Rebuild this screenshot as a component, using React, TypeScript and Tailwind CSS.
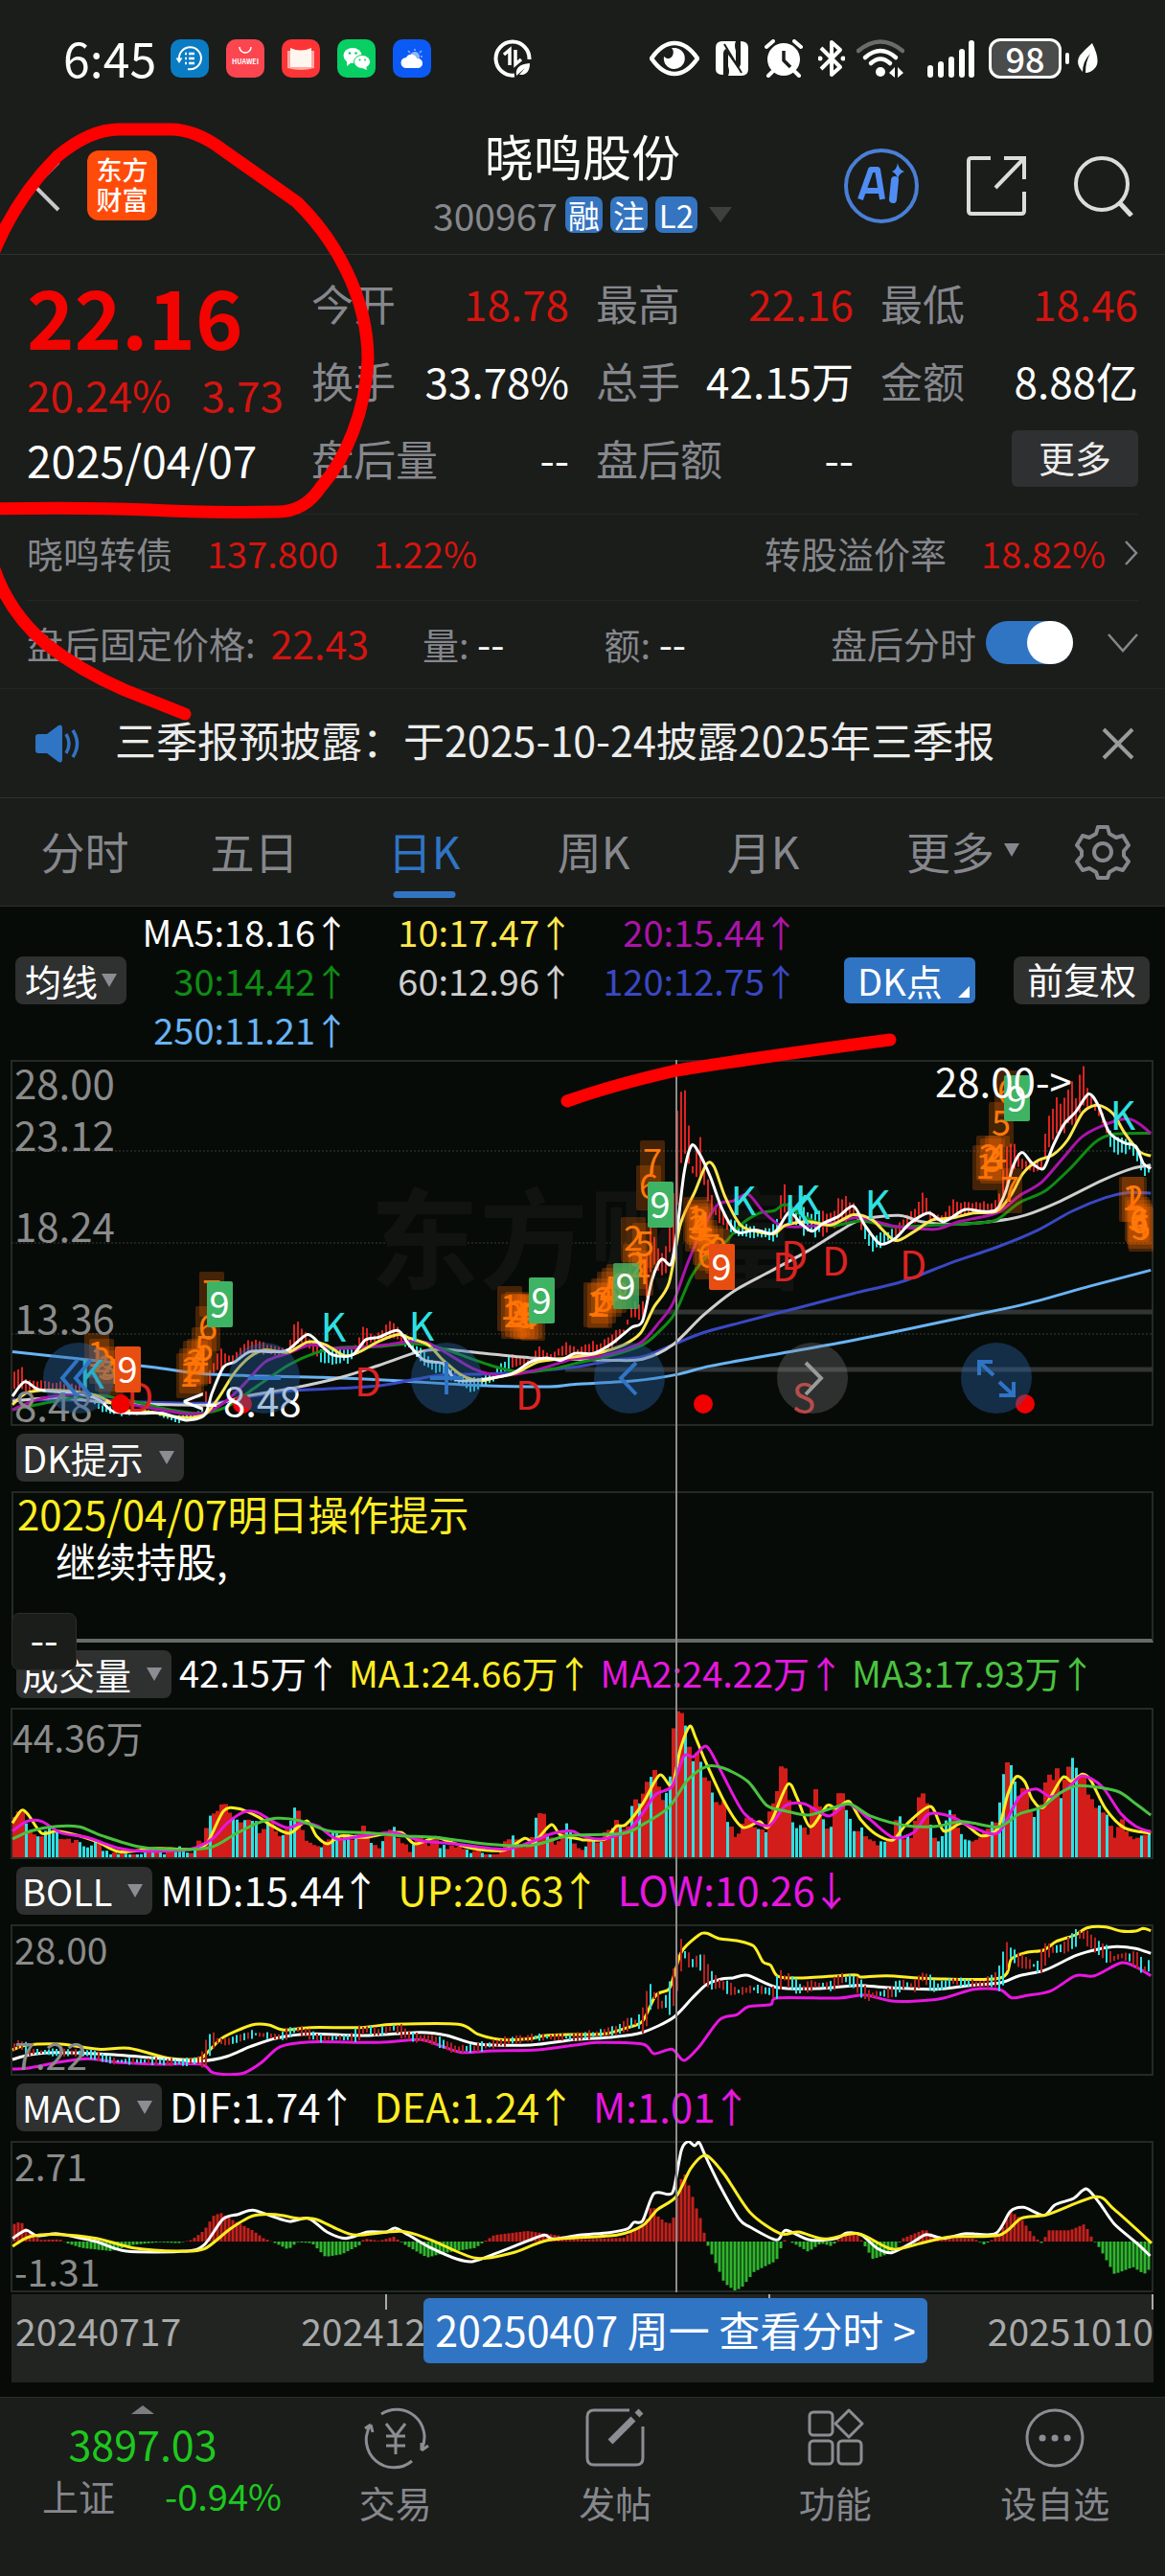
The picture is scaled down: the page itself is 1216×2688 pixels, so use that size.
import { useState } from 'react';
import type { JSX, ReactNode } from 'react';

/**
 * Stock detail screen: quote header, K-line chart with its indicator panels
 * and the bottom action bar.
 */

type Point = [number, number];

/** Maps stored series values onto the 1216-wide canvas of a panel. */
interface IGrid {
  ox: number;
  sx: number;
  oy: number;
  sy: number;
}

const RED = '#dc2320';
const CYAN = '#2ee0e2';
const YELLOW = '#ffee22';
const MAGENTA = '#e816e0';
const FRAME = '#262a27';

/* ---------- chart helpers ---------- */

function parse(raw: string, grid: IGrid): Point[] {
  return raw.split(' ').map((pair) => {
    const [x, y] = pair.split(',').map(Number);
    return [grid.ox + x / grid.sx, y / grid.sy + grid.oy];
  });
}

/** Every series is stored as a left and a right half. */
function series(left: string, right: string, oy: number, sy: number): Point[] {
  return [
    ...parse(left, { ox: 0, sx: 2.529, oy, sy }),
    ...parse(right, { ox: 600, sx: 2.545, oy, sy }),
  ].sort((a, b) => a[0] - b[0]);
}

function smooth(points: Point[]): string {
  let d = `M${points[0][0].toFixed(1)} ${points[0][1].toFixed(1)}`;
  for (let i = 0; i < points.length - 1; i++) {
    const p0 = points[Math.max(0, i - 1)];
    const p1 = points[i];
    const p2 = points[i + 1];
    const p3 = points[Math.min(points.length - 1, i + 2)];
    const k = 7;
    d += ` C${(p1[0] + (p2[0] - p0[0]) / k).toFixed(1)} ${(p1[1] + (p2[1] - p0[1]) / k).toFixed(1)}`;
    d += ` ${(p2[0] - (p3[0] - p1[0]) / k).toFixed(1)} ${(p2[1] - (p3[1] - p1[1]) / k).toFixed(1)}`;
    d += ` ${p2[0].toFixed(1)} ${p2[1].toFixed(1)}`;
  }
  return d;
}

function valueAt(points: Point[], x: number): number {
  for (let i = 1; i < points.length; i++) {
    if (x <= points[i][0]) {
      const [x0, y0] = points[i - 1];
      const [x1, y1] = points[i];
      return x1 === x0 ? y1 : y0 + ((y1 - y0) * Math.max(0, x - x0)) / (x1 - x0);
    }
  }
  return points[points.length - 1][1];
}

function noise(i: number): number {
  const v = Math.sin(i * 12.9898) * 43758.5453;
  return v - Math.floor(v);
}

const BARS = Array.from({ length: 297 }, (_, i) => 15 + i * 4);

/* ---------- K-line data ---------- */

const k = (left: string, right: string) => series(left, right, -167, 2.8);

const K_HIGH = k(
  '33,1390 52,1345 70,1400 160,1405 220,1415 225,1440 270,1475 400,1490 470,1505 538,1490 548,1390 580,1300 610,1335 660,1280 720,1300 760,1310 781,1220 815,1275 845,1305 930,1310 963,1235 985,1270 1035,1225 1060,1260 1090,1285 1150,1345 1240,1395 1300,1380 1348,1320 1400,1345 1424,1295 1450,1330 1490,1290 1520,1310',
  '0,1300 45,1285 60,1300 105,1250 130,1255 155,1170 180,1180 195,970 205,900 215,1000 240,1030 260,820 268,780 272,545 292,505 300,620 315,800 326,670 332,670 345,770 370,880 405,920 440,940 500,960 535,940 545,870 552,800 570,890 600,890 640,900 660,905 690,900 705,850 740,880 765,940 790,980 840,960 880,920 910,890 928,835 945,910 980,920 1005,870 1060,880 1110,880 1130,850 1145,720 1155,690 1190,750 1220,770 1245,740 1255,580 1265,660 1275,545 1290,590 1325,505 1335,600 1343,467 1350,467 1360,540 1380,590 1410,630 1430,690 1470,690 1490,710 1510,770 1530,760',
);
const K_LOW = k(
  '33,1440 100,1440 220,1445 270,1500 330,1510 400,1500 470,1530 540,1500 560,1400 600,1355 660,1330 760,1335 800,1300 850,1360 920,1360 960,1310 1040,1285 1080,1320 1130,1375 1180,1400 1245,1440 1300,1410 1350,1380 1424,1350 1520,1340',
  '0,1330 100,1320 155,1220 180,1235 205,1100 240,1100 262,1060 280,870 300,780 330,830 370,930 405,970 440,990 500,995 530,1010 560,930 600,980 640,1000 680,970 740,930 765,980 785,1035 840,1000 880,960 930,930 980,950 1050,920 1130,910 1150,830 1190,790 1245,800 1280,700 1330,660 1370,600 1400,650 1430,745 1480,745 1510,820 1530,800',
);
/** Canvas ranges in which the bars are painted in the "D" colour. */
const D_RANGES: Point[] = [[97, 214], [332, 368], [423, 534], [760, 812], [830, 856], [900, 934], [1156, 1203]];

const K_LINES = [
  {
    color: '#69b4f5',
    points: k(
      '33,1320 200,1340 400,1365 520,1383 650,1390 850,1395 1050,1405 1250,1418 1450,1422',
      '0,1415 160,1405 270,1387 360,1362 520,1330 700,1295 880,1255 1060,1213 1200,1180 1370,1128 1530,1082',
    ),
  },
  {
    color: '#3a48c4',
    points: k(
      '33,1460 200,1462 400,1468 560,1470 640,1455 760,1435 900,1427 1000,1420 1100,1400 1170,1388 1300,1385 1400,1378',
      '0,1365 100,1345 180,1335 260,1300 340,1265 440,1235 600,1190 740,1150 870,1115 1000,1060 1120,1015 1230,965 1320,910 1410,870 1470,855 1530,857',
    ),
  },
  {
    color: '#cfcfcf',
    points: k(
      '33,1465 150,1455 300,1470 450,1475 560,1475 650,1450 780,1425 900,1395 1000,1360 1100,1322 1170,1313 1280,1325 1400,1338',
      '0,1342 100,1345 180,1342 260,1300 340,1215 420,1145 520,1085 620,1025 700,970 760,935 860,922 920,940 1000,948 1120,938 1200,920 1290,880 1400,820 1480,785 1530,775',
    ),
  },
  {
    color: '#0f8c14',
    points: k(
      '33,1490 120,1470 250,1448 350,1465 450,1490 530,1500 600,1480 680,1420 760,1360 830,1325 900,1308 1000,1305 1080,1296 1150,1305 1230,1335 1310,1365 1380,1380 1460,1370',
      '0,1355 100,1330 180,1300 220,1265 265,1210 310,1100 360,1030 400,1000 440,950 490,915 530,908 560,890 600,920 650,945 690,952 760,938 850,955 960,950 1060,945 1120,935 1180,885 1250,850 1320,780 1380,710 1430,685 1530,682',
    ),
  },
  {
    color: '#ab14aa',
    points: k(
      '33,1490 100,1460 200,1445 300,1465 400,1485 480,1500 540,1500 590,1470 640,1420 700,1350 760,1325 820,1300 880,1310 950,1308 1020,1300 1080,1290 1130,1295 1180,1325 1250,1370 1320,1390 1400,1378 1480,1352',
      '0,1340 60,1335 130,1315 180,1290 220,1240 260,1180 300,1060 340,960 380,890 420,880 460,860 500,910 545,950 600,955 680,945 750,928 800,940 860,955 960,962 1020,940 1120,915 1180,865 1240,825 1300,750 1350,690 1420,652 1470,640 1500,655 1530,682',
    ),
  },
  {
    color: '#ffe84d',
    points: k(
      '33,1475 70,1440 130,1432 200,1437 260,1450 330,1490 400,1497 460,1510 510,1512 545,1500 580,1450 620,1380 660,1335 700,1315 760,1322 812,1292 860,1300 910,1332 950,1320 1000,1290 1050,1270 1080,1280 1130,1300 1170,1345 1220,1390 1270,1405 1310,1395 1360,1383 1420,1350 1470,1342',
      '0,1335 60,1325 130,1300 175,1265 210,1190 250,1120 280,950 320,850 350,772 370,780 400,870 440,950 480,968 530,975 560,950 620,940 680,950 740,920 790,935 850,995 900,970 950,935 1000,930 1060,915 1120,910 1160,860 1190,800 1230,762 1270,745 1310,700 1350,620 1390,600 1430,625 1460,680 1500,735 1530,748',
    ),
  },
  {
    color: '#ffffff',
    points: k(
      '33,1450 65,1408 100,1430 150,1437 200,1440 260,1460 300,1495 370,1500 430,1500 490,1520 540,1505 560,1440 590,1365 620,1350 660,1320 720,1320 760,1315 812,1270 850,1305 880,1330 930,1330 965,1285 1000,1278 1050,1258 1080,1300 1120,1345 1170,1355 1200,1400 1240,1405 1280,1400 1350,1385 1400,1350 1440,1338 1480,1345',
      '0,1325 50,1325 100,1295 150,1250 180,1230 205,1110 230,1050 255,1065 270,980 290,800 310,718 330,740 360,810 390,900 420,960 440,973 480,965 520,975 540,960 570,912 600,945 630,968 660,945 700,925 740,895 770,950 810,1005 850,990 890,945 940,915 980,940 1035,905 1080,910 1120,905 1145,850 1165,775 1188,738 1215,770 1245,785 1270,720 1300,655 1330,620 1365,567 1390,600 1420,680 1460,710 1490,720 1510,770 1530,785',
    ),
  },
];

interface IMark {
  text: string;
  x: number;
  y: number;
}

/** Nine-turn counters, drawn as orange digits on a translucent chip. */
const COUNTERS: IMark[] = [
  ['1', 101, 308], ['2', 106, 314], ['3', 112, 322], ['4', 116, 326],
  ['1', 197, 329], ['2', 200, 324], ['3', 204, 316], ['4', 208, 314], ['5', 213, 302], ['6', 217, 280], ['7', 221, 244],
  ['1', 532, 259], ['2', 536, 267], ['3', 540, 265], ['4', 545, 267], ['5', 549, 268], ['6', 553, 267], ['7', 556, 269],
  ['1', 622, 255], ['2', 626, 256], ['3', 630, 251], ['4', 636, 244], ['5', 641, 240], ['6', 646, 236],
  ['2', 661, 187], ['3', 663, 215], ['4', 669, 222], ['5', 673, 193], ['6', 677, 133], ['7', 681, 107],
  ['1', 726, 166], ['2', 730, 169], ['3', 728, 176], ['4', 732, 173], ['5', 736, 190], ['6', 738, 205], ['7', 742, 196], ['8', 749, 199],
  ['1', 1028, 112], ['2', 1032, 102], ['3', 1036, 105], ['4', 1041, 102], ['5', 1045, 67], ['6', 1051, 34], ['7', 1054, 136],
  ['1', 1181, 145], ['2', 1184, 145], ['3', 1187, 166], ['4', 1190, 173], ['5', 1191, 176], ['6', 1189, 169],
].map(([text, x, y]) => ({ text: String(text), x: Number(x), y: Number(y) }));

const NINES = [
  { x: 229, y: 255, color: '#3fb364' },
  { x: 133, y: 323, color: '#e84e12' },
  { x: 565, y: 251, color: '#3fb364' },
  { x: 653, y: 236, color: '#3fb364cc' },
  { x: 689, y: 151, color: '#3fb364' },
  { x: 753, y: 216, color: '#e84e12' },
  { x: 1061, y: 40, color: '#3fb364' },
];

const LETTERS: (IMark & { color: string })[] = [
  ['K', 96, 328, CYAN], ['K', 348, 279, CYAN], ['K', 440, 278, CYAN], ['K', 776, 147, CYAN], ['K', 832, 156, CYAN],
  ['K', 843, 146, CYAN], ['K', 916, 151, CYAN], ['K', 1172, 58, CYAN],
  ['D', 146, 352, RED], ['D', 384, 336, RED], ['D', 552, 350, RED], ['D', 820, 216, RED], ['D', 829, 204, RED],
  ['D', 872, 210, RED], ['D', 953, 214, RED], ['S', 839, 353, '#c93535'],
].map(([text, x, y, color]) => ({ text: String(text), x: Number(x), y: Number(y), color: String(color) }));

/* ---------- volume data ---------- */

const v = (left: string, right: string) => series(left, right, -13, 3);

const VOLUME = v(
  '33,335 40,400 52,328 65,380 80,425 110,430 135,405 160,430 200,450 235,475 257,440 270,480 300,488 370,488 405,465 430,485 478,465 500,480 535,440 548,375 560,348 580,358 590,315 600,352 635,390 645,370 670,375 685,420 710,385 745,435 770,360 782,330 800,430 830,465 855,460 883,405 900,430 920,435 945,430 963,393 980,462 1005,460 1035,397 1050,445 1085,475 1105,410 1130,460 1147,420 1160,460 1200,465 1240,478 1290,485 1320,485 1348,418 1370,460 1400,460 1412,365 1437,365 1445,425 1470,460 1490,387 1520,455',
  '0,455 20,470 45,430 65,468 85,397 95,440 105,363 125,410 145,390 155,285 165,330 180,300 195,247 201,250 207,130 213,260 218,270 235,320 255,220 264,60 278,40 288,57 298,125 308,198 328,155 340,245 350,257 370,315 380,350 390,290 405,385 430,435 450,390 462,365 480,408 510,415 522,303 532,340 543,210 557,205 565,305 580,400 605,395 620,440 635,273 645,320 675,420 695,310 707,268 717,360 728,355 740,415 758,405 785,455 820,450 845,445 858,333 870,430 900,430 908,300 920,298 932,320 945,410 960,440 975,440 992,343 1005,370 1020,415 1050,450 1075,445 1100,390 1120,385 1132,280 1144,207 1156,210 1165,240 1178,315 1195,262 1215,390 1235,330 1245,340 1255,177 1265,300 1277,195 1290,310 1307,235 1327,167 1337,280 1348,220 1358,290 1380,335 1410,355 1435,440 1450,375 1465,430 1490,445 1515,430 1530,407',
);

const VOLUME_LINES = [
  {
    color: YELLOW,
    points: v(
      '33,400 57,360 75,375 110,432 150,425 210,440 260,460 315,490 400,480 450,480 500,482 545,465 590,362 630,355 680,380 720,410 765,432 810,393 835,440 865,465 900,440 960,445 1010,435 1060,430 1095,465 1150,445 1190,460 1250,480 1330,485 1385,448 1410,460 1455,405 1480,438 1530,450',
      '25,453 80,450 110,410 135,405 180,340 225,250 258,283 280,170 305,97 320,130 350,215 400,340 445,413 490,395 515,410 565,280 590,320 625,412 670,345 695,355 728,332 760,390 800,435 845,453 880,405 945,348 980,425 1030,400 1080,440 1125,415 1150,310 1172,255 1195,270 1215,325 1245,350 1295,258 1320,270 1348,247 1370,265 1410,355 1460,415 1530,432',
    ),
  },
  {
    color: MAGENTA,
    points: v(
      '33,425 70,395 110,395 160,430 230,445 310,478 380,488 500,482 560,450 600,400 645,365 680,367 720,395 760,415 800,400 840,410 890,450 960,440 1040,430 1110,455 1200,465 1330,482 1400,460 1460,432 1510,425',
      '20,440 70,450 140,425 180,370 215,310 258,285 290,190 315,192 350,160 385,230 450,370 515,408 560,345 610,340 675,378 725,340 780,385 845,445 900,430 940,372 1000,380 1060,415 1125,430 1180,320 1225,293 1265,318 1310,290 1348,252 1400,285 1450,370 1490,410 1530,428',
    ),
  },
  {
    color: '#49c33f',
    points: v(
      '33,450 80,425 150,410 210,412 270,440 370,475 480,483 560,475 620,435 680,400 730,385 790,392 870,425 960,430 1060,440 1150,445 1280,465 1400,470 1480,445',
      '0,438 130,432 180,405 250,350 300,265 350,223 395,228 460,270 510,345 560,362 620,375 680,355 730,340 790,380 880,408 960,410 1030,395 1125,412 1180,372 1240,350 1290,305 1340,283 1440,300 1490,340 1530,375',
    ),
  },
];

/* ---------- BOLL data ---------- */

const b = (left: string, right: string) => series(left, right, -239, 3);

const BOLL_MID = b(
  '33,1105 52,1090 75,1115 150,1118 230,1120 300,1145 400,1145 480,1150 535,1140 560,1080 600,1085 670,1060 740,1070 782,1045 850,1075 930,1070 965,1045 1000,1055 1040,1040 1090,1070 1150,1080 1200,1108 1250,1105 1350,1080 1420,1070',
  '0,1070 110,1050 150,1025 180,1020 205,930 230,970 255,945 270,880 285,800 310,840 330,830 360,890 430,928 480,918 530,930 552,880 600,920 640,905 680,910 710,885 745,900 780,940 840,930 870,905 905,910 925,880 960,915 1005,895 1080,905 1130,885 1152,800 1180,830 1230,850 1255,800 1300,790 1346,745 1380,780 1430,825 1450,815 1490,825 1515,858 1530,840',
);

const BOLL_LINES = [
  {
    color: YELLOW,
    points: b(
      '33,1110 70,1095 160,1092 260,1108 340,1105 450,1137 525,1138 550,1115 590,1070 665,1032 710,1032 750,1048 820,1040 950,1040 1040,1030 1210,1030 1260,1060 1320,1078 1400,1075 1440,1065',
      '0,1062 80,1060 140,1040 180,1020 215,940 250,920 265,870 285,800 330,750 350,745 385,762 430,768 475,785 500,835 520,845 540,880 600,885 740,875 760,882 830,878 950,887 1130,885 1160,825 1200,805 1245,798 1280,770 1330,750 1360,728 1410,725 1450,738 1490,738 1510,730 1530,737',
    ),
  },
  {
    color: MAGENTA,
    points: b(
      '33,1170 70,1168 150,1150 230,1138 320,1150 420,1155 530,1155 560,1180 600,1187 645,1182 690,1150 740,1100 820,1085 1000,1087 1110,1078 1170,1100 1220,1118 1300,1113 1420,1110',
      '0,1095 60,1087 180,1092 210,1122 258,1108 290,1143 330,1100 385,1015 430,1000 460,975 520,968 540,947 700,948 770,938 850,958 970,950 1060,920 1130,922 1160,947 1200,940 1265,925 1330,878 1380,878 1450,838 1490,850 1530,878',
    ),
  },
  {
    color: '#ffffff',
    points: b(
      '33,1140 80,1125 150,1118 300,1125 450,1140 530,1145 600,1130 660,1100 730,1073 820,1060 960,1065 1110,1055 1180,1065 1260,1092 1400,1095',
      '0,1078 100,1070 180,1055 260,1010 310,950 350,905 390,888 420,885 460,877 540,915 650,918 750,908 830,915 960,920 1050,908 1130,900 1180,878 1250,860 1330,815 1390,795 1440,787 1490,793 1530,808',
    ),
  },
];

/* ---------- MACD data ---------- */

const MACD_GRID: IGrid = { ox: 0, sx: 1.2895, oy: -65, sy: 3 };
const MACD_ZERO = 105;

const MACD_BARS = parse(
  '17,457 28,447 40,485 55,505 80,503 90,515 110,530 150,540 180,520 215,512 240,515 258,505 275,475 287,430 297,420 315,445 340,475 355,500 368,512 388,535 400,512 420,515 438,558 460,550 485,520 490,500 510,508 530,495 545,520 575,560 600,545 640,530 655,505 665,490 710,477 750,490 785,503 840,498 850,480 868,455 878,390 885,430 900,457 908,430 915,320 922,300 928,340 938,410 945,450 950,508 960,560 975,640 990,665 1000,650 1015,605 1045,570 1055,505 1068,515 1088,542 1105,515 1120,525 1135,485 1155,490 1175,565 1200,545 1215,500 1245,472 1265,505 1280,500 1310,500 1325,520 1345,490 1360,415 1375,440 1390,490 1402,515 1412,475 1440,475 1460,455 1470,500 1480,530 1500,612 1525,590 1540,612 1550,590',
  MACD_GRID,
);
const MACD_LINES = [
  {
    color: '#ffffff',
    points: parse(
      '17,500 35,475 50,492 75,485 100,495 130,510 170,540 250,540 275,520 300,440 320,425 340,412 365,430 390,447 415,437 440,480 465,500 495,480 520,480 532,468 550,490 580,530 615,565 637,572 670,545 710,508 733,490 745,502 780,490 820,482 845,470 853,450 865,445 880,360 900,362 907,345 917,225 926,197 935,210 941,200 950,245 970,340 995,440 1010,465 1045,505 1058,475 1090,505 1125,500 1140,483 1160,490 1180,530 1200,545 1230,510 1247,488 1270,500 1300,485 1340,485 1360,415 1378,403 1405,428 1420,395 1445,375 1462,345 1480,390 1500,455 1530,515 1548,555',
      MACD_GRID,
    ),
  },
  {
    color: YELLOW,
    points: parse(
      '17,525 40,495 80,488 130,500 180,530 240,540 275,533 310,470 340,430 370,425 400,437 425,440 455,472 480,490 540,478 580,505 640,562 690,545 740,505 830,490 865,460 885,410 910,370 930,280 950,240 975,300 1010,420 1050,485 1075,480 1110,502 1155,485 1200,533 1240,515 1280,495 1345,490 1375,437 1410,425 1475,370 1500,410 1550,515',
      MACD_GRID,
    ),
  },
];

/* ---------- shared pieces ---------- */

function Lines({ items, width = 3 }: { items: { color: string; points: Point[] }[]; width?: number }): JSX.Element {
  return (
    <>
      {items.map((item, i) => (
        <path key={i} d={smooth(item.points)} fill="none" stroke={item.color} strokeWidth={width} strokeLinejoin="round" />
      ))}
    </>
  );
}

function Panel({ height, label, children }: { height: number; label: string; children: ReactNode }): JSX.Element {
  return (
    <svg viewBox={`0 0 1216 ${height}`} className="block w-full" role="img" aria-label={label}>
      <rect x="12" y="1" width="1191" height={height - 2} fill="none" stroke={FRAME} strokeWidth="2" />
      {children}
    </svg>
  );
}

/** A value followed by its trend arrow. */
function Trend({ children, down = false }: { children: ReactNode; down?: boolean }): JSX.Element {
  return (
    <span className="inline-flex whitespace-nowrap">
      {children}
      <span className="inline-flex w-[34px] justify-center">{down ? '↓' : '↑'}</span>
    </span>
  );
}

function PickButton({ children, tight = false }: { children: ReactNode; tight?: boolean }): JSX.Element {
  return (
    <button
      type="button"
      className={`flex h-[50px] shrink-0 items-center rounded-lg bg-[#2f3030] text-[38px] leading-none text-white ${
        tight ? 'gap-1 px-2.5' : 'gap-4 pr-2.5 pl-1.5'
      }`}
    >
      {children}
      <svg viewBox="0 0 16 14" className="h-3.5 w-4 fill-[#8c8d93]" aria-hidden="true">
        <path d="M0 0h16L8 14z" />
      </svg>
    </button>
  );
}

/* ---------- status bar ---------- */

function StatusBar(): JSX.Element {
  return (
    <div className="flex h-[122px] items-center pr-[70px] pl-[66px]">
      <span className="w-28 pb-1 text-[50px] leading-none text-white">6:45</span>
      <div className="flex gap-[18px]">
        <svg viewBox="0 0 40 40" className="size-10" aria-label="备份">
          <rect width="40" height="40" rx="10" fill="#0a7cc4" />
          <path d="M9 21a11.5 11.5 0 1 1 9 10" fill="none" stroke="#fff" strokeWidth="2" />
          <path d="M5.5 19.5h7L9 25z" fill="#fff" />
          <path d="M15 15h2M19 15h6M15 20h2M19 20h6M15 25h2M19 25h6" stroke="#fff" strokeWidth="2.5" />
        </svg>
        <svg viewBox="0 0 40 40" className="size-10" aria-label="HUAWEI">
          <rect width="40" height="40" rx="10" fill="#fb4650" />
          <path d="M14 8a6 6 0 0 0 12 0" fill="none" stroke="#fff" strokeWidth="1.5" />
          <text x="20" y="26" textAnchor="middle" fontSize="7" fontWeight="700" fill="#fff">HUAWEI</text>
        </svg>
        <svg viewBox="0 0 40 40" className="size-10" aria-label="阅读">
          <rect width="40" height="40" rx="10" fill="#fb3436" />
          <path d="M6 12h28v18q-14 4-28 0z" fill="#ffa9a2" />
          <path d="M9 9q11 5 22 0v20H9z" fill="#fff6f0" />
        </svg>
        <svg viewBox="0 0 40 40" className="size-10" aria-label="微信">
          <rect width="40" height="40" rx="10" fill="#07cf63" />
          <ellipse cx="16" cy="17" rx="9.5" ry="8" fill="#fff" />
          <path d="M10 22v6l5-4z" fill="#fff" />
          <ellipse cx="26" cy="23.5" rx="8.5" ry="7" fill="#fff" stroke="#07cf63" />
          <path d="M30 28l1 4-5-2z" fill="#fff" />
          <g fill="#07cf63">
            <circle cx="13" cy="14.5" r="1.3" />
            <circle cx="19.5" cy="14.5" r="1.3" />
            <circle cx="23.5" cy="21.5" r="1" />
            <circle cx="29" cy="21.5" r="1" />
          </g>
        </svg>
        <svg viewBox="0 0 40 40" className="size-10" aria-label="天气">
          <rect width="40" height="40" rx="10" fill="#0c5af5" />
          <circle cx="23" cy="18" r="5" fill="#8db4ff" />
          <path d="M23 10v2M16 12l2 2M30 12l-2 2M29 18h2M28 24l2 2" stroke="#8db4ff" strokeWidth="1.5" />
          <path d="M14 30a5.5 5.5 0 0 1 0-11 6 6 0 0 1 11 1 5 5 0 0 1 2 10z" fill="#fff" />
        </svg>
      </div>
      <svg viewBox="0 0 40 40" className="ml-[65px] size-10" aria-label="省流">
        <path d="M22 37.5A17.5 17.5 0 1 1 37.5 21" fill="none" stroke="#fff" strokeWidth="4" />
        <path d="M11 16l6-5v16M23 11v15l6-5" fill="none" stroke="#fff" strokeWidth="3.5" />
        <path d="M24 38q-2-12 14-13 0 13-11 12l6-7z" fill="#fff" />
      </svg>
      <div className="ml-auto flex items-center">
        <svg viewBox="0 0 52 38" className="h-[38px] w-[52px]" aria-label="护眼">
          <path d="M2 19Q13 3 26 3t24 16Q39 35 26 35T2 19z" fill="none" stroke="#fff" strokeWidth="4.5" />
          <path d="M26 8a11 11 0 1 1-11 9q6 5 9-1 2-5-1-8z" fill="#fff" />
        </svg>
        <svg viewBox="0 0 36 38" className="ml-4 h-[38px] w-9" aria-label="NFC">
          <path d="M8 1h14q-2 4 0 10v12L12 9q-3 1-3 5v22q-8 0-8-6V8q0-7 7-7z" fill="#fff" />
          <path d="M28 37H14q2-4 0-10V15l10 14q3-1 3-5V1q8 0 8 7v22q0 7-7 7z" fill="#fff" />
          <path d="M10 4l18 30" stroke="#1a1d1a" strokeWidth="2" />
        </svg>
        <svg viewBox="0 0 40 40" className="ml-4 size-10" aria-label="闹钟">
          <circle cx="20" cy="21" r="17" fill="#fff" />
          <path d="M2 8l7-6M38 8l-7-6M8 34l-4 4M32 34l4 4" stroke="#fff" strokeWidth="4" strokeLinecap="round" />
          <path d="M20 12v10l7 7" fill="none" stroke="#1a1d1a" strokeWidth="3.5" />
        </svg>
        <svg viewBox="0 0 28 40" className="ml-4 h-10 w-7" aria-label="蓝牙">
          <path d="M3 9l20 20-9 8V3l9 8L3 31" fill="none" stroke="#fff" strokeWidth="4" strokeLinejoin="round" />
          <circle cx="2" cy="20" r="2.5" fill="#fff" />
          <circle cx="26" cy="20" r="2.5" fill="#fff" />
        </svg>
        <svg viewBox="0 0 50 40" className="ml-3 h-10 w-[50px]" aria-label="无线网络">
          <path d="M2 12Q25-7 48 12" fill="none" stroke="#6a6c6a" strokeWidth="4.5" strokeLinecap="round" />
          <path d="M9 19q16-14 32 0M15 25q10-9 20 0" fill="none" stroke="#fff" strokeWidth="4.5" strokeLinecap="round" />
          <circle cx="25" cy="34" r="5" fill="#fff" />
          <path d="M40 29v11l-6-5zM43 29v11l6-5z" fill="#fff" />
        </svg>
        <svg viewBox="0 0 50 40" className="ml-6 h-10 w-[50px]" aria-label="信号">
          <path d="M3 30v7M14 26v11M25 21v16M36 13v24M46 4v33" stroke="#fff" strokeWidth="6" strokeLinecap="round" />
        </svg>
        <span className="ml-3.5 flex h-[42px] w-[76px] items-center justify-center rounded-xl border-[3px] border-white bg-[#4a4b4b] pb-0.5 text-[36px] leading-none font-medium text-white">
          98
        </span>
        <span className="ml-1 h-3 w-1 rounded-full bg-white" />
        <svg viewBox="0 0 22 34" className="ml-2 h-[34px] w-[22px]" aria-label="省电">
          <path d="M16 1q10 20 2 27-4 4-9 4 0-12 5-20-8 8-8 19Q-2 22 3 14 8 8 16 1z" fill="#fff" />
        </svg>
      </div>
    </div>
  );
}

/* ---------- header ---------- */

function Header(): JSX.Element {
  return (
    <header className="grid h-[143px] grid-cols-[1fr_auto_1fr] items-center pr-8 pl-8">
      <div className="flex items-center gap-[27px]">
        <button type="button" aria-label="返回">
          <svg viewBox="0 0 32 56" className="h-14 w-8" fill="none" stroke="#c9c9c9" strokeWidth="4">
            <path d="M29 3L4 28l25 25" />
          </svg>
        </button>
        <span className="grid size-[73px] place-content-center rounded-xl bg-[#ff4b0a] pb-1 text-center text-[27px] leading-[31px] font-medium text-white">
          <span>东方</span>
          <span>财富</span>
        </span>
      </div>
      <div className="flex flex-col items-center pb-2">
        <h1 className="text-[51px] leading-[68px] text-white">晓鸣股份</h1>
        <button type="button" className="flex items-center gap-2 text-[39px] leading-[56px] text-[#86878d]">
          300967
          <span className="flex gap-2 text-[33px] leading-[38px] text-white">
            <span className="w-[39px] rounded-lg bg-[#3474c0] text-center">融</span>
            <span className="w-[39px] rounded-lg bg-[#3474c0] text-center">注</span>
            <span className="w-11 rounded-lg bg-[#3474c0] text-center">L2</span>
          </span>
          <svg viewBox="0 0 24 16" className="ml-1 h-4 w-6 fill-[#3e403f]" aria-hidden="true">
            <path d="M0 0h24L12 16z" />
          </svg>
        </button>
      </div>
      <div className="flex items-center justify-end gap-12">
        <button type="button" aria-label="AI">
          <svg viewBox="0 0 80 80" className="size-20">
            <circle cx="40" cy="40" r="37" fill="none" stroke="#4a7fd6" strokeWidth="4" />
            <path d="M18 54l11-31h7l5 31M23 45h16" fill="none" stroke="#4f8df5" strokeWidth="6" strokeLinejoin="round" />
            <path d="M54 34l-2 20" stroke="#4f8df5" strokeWidth="8" strokeLinecap="round" />
            <path d="M57 16q1 7 7 9-6 2-7 8-1-6-6-8 5-2 6-9z" fill="#4f8df5" />
          </svg>
        </button>
        <button type="button" aria-label="分享">
          <svg viewBox="0 0 64 64" className="size-16" fill="none" stroke="#dcdcdc" strokeWidth="4">
            <path d="M26 3H6q-3 0-3 3v52q0 3 3 3h52q3 0 3-3V38M40 3h21v22M61 3L31 34" />
          </svg>
        </button>
        <button type="button" aria-label="搜索">
          <svg viewBox="0 0 64 64" className="size-16" fill="none" stroke="#dcdcdc" strokeWidth="4">
            <circle cx="30" cy="30" r="27" />
            <path d="M48 49l13 14" strokeWidth="5" />
          </svg>
        </button>
      </div>
    </header>
  );
}

/* ---------- quote ---------- */

function Stat({ label, value, tone = 'text-white' }: { label: string; value: string; tone?: string }): JSX.Element {
  return (
    <div className="flex justify-between whitespace-nowrap">
      <dt className="text-[#86878d]">{label}</dt>
      <dd className={tone}>{value}</dd>
    </div>
  );
}

function Quote(): JSX.Element {
  return (
    <section className="mx-7 flex border-b border-[#242724] pt-2.5 pb-[17px]">
      <div className="w-[297px] shrink-0">
        <p className="text-[84px] leading-[105px] font-bold text-[#f20400]">22.16</p>
        <p className="flex gap-8 text-[44px] leading-[60px] text-[#d5140f]">
          <span>20.24%</span>
          <span>3.73</span>
        </p>
        <p className="text-[46px] leading-[77px] text-white">2025/04/07</p>
      </div>
      <dl className="grid flex-1 grid-cols-3 gap-x-7 text-[44px] leading-[81px]">
        <Stat label="今开" value="18.78" tone="text-[#d5140f]" />
        <Stat label="最高" value="22.16" tone="text-[#d5140f]" />
        <Stat label="最低" value="18.46" tone="text-[#d5140f]" />
        <Stat label="换手" value="33.78%" />
        <Stat label="总手" value="42.15万" />
        <Stat label="金额" value="8.88亿" />
        <Stat label="盘后量" value="--" />
        <Stat label="盘后额" value="--" />
        <div className="flex items-center justify-end">
          <button type="button" className="rounded-md bg-[#2f3031] px-7 pb-1 text-[38px] leading-[55px] text-[#ececec]">
            更多
          </button>
        </div>
      </dl>
    </section>
  );
}

function BondRow(): JSX.Element {
  return (
    <a
      href="#bond"
      className="mx-7 flex h-[90px] items-center border-b border-[#242724] pb-2.5 text-[38px] leading-none whitespace-nowrap text-[#86878d]"
    >
      晓鸣转债
      <span className="ml-9 text-[#d5140f]">137.800</span>
      <span className="ml-9 text-[#d5140f]">1.22%</span>
      <span className="ml-auto">转股溢价率</span>
      <span className="ml-9 text-[#d5140f]">18.82%</span>
      <svg viewBox="0 0 14 26" className="ml-5 h-[26px] w-3.5" fill="none" stroke="#86878d" strokeWidth="2.5" aria-hidden="true">
        <path d="M1 1l11 12L1 25" />
      </svg>
    </a>
  );
}

function AfterHoursRow(): JSX.Element {
  const [on, setOn] = useState(true);
  return (
    <section className="flex h-[92px] items-center border-b border-[#242724] px-7 pb-1 text-[38px] leading-none whitespace-nowrap text-[#86878d]">
      盘后固定价格:
      <span className="ml-4 text-[41px] text-[#d5140f]">22.43</span>
      <span className="ml-14">
        量: <span className="text-[41px] text-white">--</span>
      </span>
      <span className="ml-[104px]">
        额: <span className="text-[41px] text-white">--</span>
      </span>
      <label className="ml-auto flex items-center gap-2.5">
        盘后分时
        <input type="checkbox" checked={on} onChange={() => setOn(!on)} className="sr-only" />
        <span className={`flex h-[45px] w-[91px] rounded-full ${on ? 'justify-end bg-[#3074c4]' : 'bg-[#4a4b4b]'}`}>
          <span className="h-[45px] w-12 rounded-full bg-white" />
        </span>
      </label>
      <button type="button" aria-label="展开" className="ml-9">
        <svg viewBox="0 0 32 20" className="h-5 w-8" fill="none" stroke="#86878d" strokeWidth="2.5">
          <path d="M1 1l15 17L31 1" />
        </svg>
      </button>
    </section>
  );
}

function Notice(): JSX.Element {
  return (
    <section className="flex h-[114px] items-center border-b border-[#2e312e] pr-8 pl-9">
      <svg viewBox="0 0 48 40" className="h-10 w-12 fill-[#3074c4]" aria-hidden="true">
        <path d="M1 13q0-3 3-3h9L25 1q4-2 4 3v32q0 5-4 3l-12-9H4q-3 0-3-3z" />
        <path d="M33 10q6 10 0 20M40 6q9 14 0 28" fill="none" stroke="#3074c4" strokeWidth="3.5" />
      </svg>
      <p className="ml-9 pb-2 text-[43px] leading-none whitespace-nowrap text-[#ececec]">三季报预披露：于2025-10-24披露2025年三季报</p>
      <button type="button" aria-label="关闭" className="ml-auto">
        <svg viewBox="0 0 34 34" className="size-[34px]" fill="none" stroke="#9a9b9d" strokeWidth="4">
          <path d="M2 2l30 30M32 2L2 32" />
        </svg>
      </button>
    </section>
  );
}

const TABS = ['分时', '五日', '日K', '周K', '月K'];

function Tabs(): JSX.Element {
  const [active, setActive] = useState('日K');
  return (
    <nav className="flex h-[113px] items-center border-b border-[#2e312e] pr-9 text-[46px] leading-none text-[#86878d]">
      {TABS.map((tab) => (
        <button
          key={tab}
          type="button"
          onClick={() => setActive(tab)}
          className={`relative h-full w-[15%] pb-1 ${tab === active ? 'text-[#3074c4]' : ''}`}
        >
          {tab}
          {tab === active && <span className="absolute bottom-2 left-1/2 h-[7px] w-[65px] -translate-x-1/2 rounded-full bg-[#3074c4]" />}
        </button>
      ))}
      <button type="button" className="ml-auto flex items-center gap-2.5 pb-1">
        更多
        <svg viewBox="0 0 16 14" className="h-3.5 w-4 fill-[#86878d]" aria-hidden="true">
          <path d="M0 0h16L8 14z" />
        </svg>
      </button>
      <button type="button" aria-label="设置" className="ml-[58px]">
        <svg viewBox="0 0 58 58" className="size-[58px]" fill="none" stroke="#86878d" strokeWidth="4" strokeLinejoin="round">
          <path d="M24 3h10l2 7 7 4 7-2 6 10-5 6v5l5 6-6 9-7-2-7 4-2 6H24l-2-6-7-4-7 2-6-9 5-6v-5l-5-6 6-10 7 2 7-4z" />
          <circle cx="29" cy="29" r="9" />
        </svg>
      </button>
    </nav>
  );
}

/* ---------- chart ---------- */

function MaLegend(): JSX.Element {
  return (
    <div className="flex items-center pr-4 pb-[7px] pl-4">
      <PickButton tight>均线</PickButton>
      <div className="grid grid-cols-[231px_234px_235px] justify-items-end text-[38px] leading-[51px]">
        <span className="text-white"><Trend>MA5:18.16</Trend></span>
        <span className="text-[#ffe84d]"><Trend>10:17.47</Trend></span>
        <span className="text-[#ab14aa]"><Trend>20:15.44</Trend></span>
        <span className="text-[#0f8c14]"><Trend>30:14.42</Trend></span>
        <span className="text-[#cfcfcf]"><Trend>60:12.96</Trend></span>
        <span className="text-[#3a48c4]"><Trend>120:12.75</Trend></span>
        <span className="text-[#69b4f5]"><Trend>250:11.21</Trend></span>
      </div>
      <button type="button" className="ml-auto flex h-12 w-[137px] items-center justify-between rounded-md bg-[#3074c4] pr-1.5 pl-3.5 text-[38px] leading-none text-white">
        DK点
        <svg viewBox="0 0 12 12" className="mt-6 size-3 fill-white" aria-hidden="true">
          <path d="M12 0v12H0z" />
        </svg>
      </button>
      <button type="button" className="ml-10 h-[50px] rounded-lg bg-[#2f3030] px-3.5 pb-1 text-[38px] leading-none text-white">
        前复权
      </button>
    </div>
  );
}

function KLineChart(): JSX.Element {
  return (
    <Panel height={382} label="日K线">
      {[95, 191, 286].map((y) => (
        <path key={y} d={`M12 ${y}H1203`} stroke="#3a3d3a" strokeDasharray="2 2" />
      ))}
      <text x="614" y="230" textAnchor="middle" fontSize="114" fontWeight="700" fill="#101310">东方财富</text>
      <path d="M680 263H1203M590 323H1203" stroke="#333534" strokeWidth="5" />
      {BARS.map((x, i) => {
        const high = valueAt(K_HIGH, x);
        const low = valueAt(K_LOW, x);
        const span = low - high;
        const inD = D_RANGES.some(([from, to]) => x >= from && x <= to);
        return (
          <path
            key={x}
            d={`M${x} ${(high + noise(i) * span * 0.22).toFixed(1)}V${(low - noise(i + 500) * span * 0.3).toFixed(1)}`}
            stroke={inD ? CYAN : RED}
            strokeWidth="2"
          />
        );
      })}
      <Lines items={K_LINES} />
      {COUNTERS.map((mark, i) => (
        <g key={i}>
          <rect x={mark.x - 13} y={mark.y - 23} width="26" height="47" rx="2" fill="#ff6a00" opacity="0.25" />
          <text x={mark.x} y={mark.y + 12} textAnchor="middle" fontSize="36" fill="#ff7a0a">{mark.text}</text>
        </g>
      ))}
      {LETTERS.map((mark, i) => (
        <text key={i} x={mark.x} y={mark.y + 15} textAnchor="middle" fontSize="41" fill={mark.color}>{mark.text}</text>
      ))}
      {NINES.map((nine) => (
        <g key={nine.x}>
          <rect x={nine.x - 13} y={nine.y - 24} width="27" height="48" rx="2" fill={nine.color} />
          <text x={nine.x} y={nine.y + 14} textAnchor="middle" fontSize="38" fill="#fff">9</text>
        </g>
      ))}
      {[126, 253, 734, 1070].map((x) => (
        <circle key={x} cx={x} cy="359" r="10" fill="#f20000" />
      ))}
      <g fontSize="42" fill="#8b8b8b">
        <text x="15" y="41">28.00</text>
        <text x="15" y="95">23.12</text>
        <text x="15" y="190">18.24</text>
        <text x="15" y="286">13.36</text>
        <text x="15" y="377">8.48</text>
      </g>
      <g fontSize="42" fill="#fff">
        <text x="190" y="372">&lt;-</text>
        <text x="233" y="372">8.48</text>
        <text x="976" y="39">28.00-&gt;</text>
      </g>
    </Panel>
  );
}

const CHART_BUTTONS = [
  { label: '最左', left: 'left-[45px]', d: 'M36 18L20 37l16 19M50 18L34 37l16 19' },
  { label: '缩小', left: 'left-[239px]', d: 'M20 37h34' },
  { label: '放大', left: 'left-[429px]', d: 'M20 37h34M37 20v34' },
  { label: '左移', left: 'left-[620px]', d: 'M44 21L28 37l16 17' },
  { label: '右移', left: 'left-[811px]', d: 'M30 21l16 16-16 17', muted: true },
  { label: '全屏', left: 'left-[1003px]', d: 'M19 34V20h14M19 20l15 14M40 55h15V41M40 41l15 14' },
];

function VolumeChart(): JSX.Element {
  return (
    <Panel height={158} label="成交量">
      {BARS.map((x, i) => {
        const y = Math.min(153, valueAt(VOLUME, x) + noise(i * 3) * 7);
        const down = noise(i + 40) < 0.38;
        return <rect key={x} x={down ? x - 1 : x - 2} y={y} width={down ? 3 : 5} height={156 - y} fill={down ? CYAN : '#d21d1a'} />;
      })}
      <Lines items={VOLUME_LINES} />
      <text x="13" y="47" fontSize="39" fill="#8b8b8b">44.36万</text>
    </Panel>
  );
}

function BollChart(): JSX.Element {
  return (
    <Panel height={158} label="BOLL">
      <Lines items={BOLL_LINES} />
      {BARS.map((x, i) => {
        const y = valueAt(BOLL_MID, x);
        const slope = Math.abs(valueAt(BOLL_MID, x + 6) - valueAt(BOLL_MID, x - 6));
        const half = 1 + noise(i) * 3 + Math.min(16, slope * 0.6);
        return (
          <path
            key={x}
            d={`M${x} ${Math.max(2, y - half).toFixed(1)}V${(y + half).toFixed(1)}`}
            stroke={noise(i + 40) < 0.42 ? CYAN : '#b3211e'}
            strokeWidth="2"
          />
        );
      })}
      <text x="15" y="42" fontSize="39" fill="#8b8b8b">28.00</text>
      <text x="15" y="152" fontSize="39" fill="#8b8b8b">7.22</text>
    </Panel>
  );
}

function MacdChart(): JSX.Element {
  return (
    <Panel height={158} label="MACD">
      {BARS.map((x) => {
        const y = valueAt(MACD_BARS, x);
        return <path key={x} d={`M${x} ${MACD_ZERO}V${y.toFixed(1)}`} stroke={y < MACD_ZERO ? '#c4201c' : '#2fb52d'} strokeWidth="3" />;
      })}
      <Lines items={MACD_LINES} />
      <text x="15" y="42" fontSize="39" fill="#8b8b8b">2.71</text>
      <text x="15" y="152" fontSize="39" fill="#8b8b8b">-1.31</text>
    </Panel>
  );
}

function IndicatorRow({ name, dense = false, children }: { name: string; dense?: boolean; children?: ReactNode }): JSX.Element {
  return (
    <div className="flex h-[68px] items-center gap-2 pb-0.5 pl-[17px] leading-none">
      <PickButton>{name}</PickButton>
      <div className={`flex pb-1 ${dense ? 'gap-2.5 text-[38px]' : 'gap-[22px] text-[42px]'}`}>{children}</div>
    </div>
  );
}

function TimeAxis(): JSX.Element {
  return (
    <div className="relative mx-3 mt-0.5 flex h-[92px] justify-between bg-[#222422] text-[39px] leading-[74px] text-[#a9aaaa]">
      <span className="absolute top-0 left-[390px] h-4 w-0.5 bg-[#a9aaaa]" />
      <span className="absolute top-0 left-[790px] h-4 w-0.5 bg-[#a9aaaa]" />
      <span className="absolute top-0 right-0 h-4 w-0.5 bg-[#a9aaaa]" />
      <span className="pl-1">20240717</span>
      <div className="relative flex flex-1 pl-[125px]">
        <span className="w-[128px] overflow-hidden">202412</span>
        <a href="#intraday" className="mt-1 h-[68px] rounded-md bg-[#3074c4] px-3 text-[43px] leading-[64px] whitespace-nowrap text-white">
          20250407 周一 查看分时 &gt;
        </a>
      </div>
      <span>20251010</span>
    </div>
  );
}

function Chart(): JSX.Element {
  return (
    <main className="bg-[#070b08] pb-[15px]">
      <MaLegend />
      <div className="relative">
        <div className="relative">
          <KLineChart />
          {CHART_BUTTONS.map((button) => (
            <button
              key={button.label}
              type="button"
              aria-label={button.label}
              className={`absolute bottom-[13px] size-[74px] rounded-full ${button.left} ${button.muted ? 'bg-[#8888884d]' : 'bg-[#2863a866]'}`}
            >
              <svg viewBox="0 0 74 74" fill="none" strokeWidth="4" className={button.muted ? 'stroke-[#9a9a9a]' : 'stroke-[#3074c4]'}>
                <path d={button.d} />
              </svg>
            </button>
          ))}
        </div>
        <IndicatorRow name="DK提示" />
        <section className="relative mx-3 h-[158px] border-x-2 border-t-2 border-b-4 border-[#262a27] border-b-[#666b67] px-1 text-[42px]">
          <p className="leading-[42px] text-[#ffee22]">2025/04/07明日操作提示</p>
          <p className="pl-10 leading-[56px] text-white">继续持股,</p>
          <span className="absolute top-[125px] -left-0.5 z-10 h-[60px] w-[68px] rounded-lg border border-[#2b2e2b] bg-[#1a1d1a] text-center leading-[50px] text-white">
            --
          </span>
        </section>
        <IndicatorRow name="成交量" dense>
          <span className="text-white"><Trend>42.15万</Trend></span>
          <span className="text-[#ffee22]"><Trend>MA1:24.66万</Trend></span>
          <span className="text-[#e816e0]"><Trend>MA2:24.22万</Trend></span>
          <span className="text-[#49c33f]"><Trend>MA3:17.93万</Trend></span>
        </IndicatorRow>
        <VolumeChart />
        <IndicatorRow name="BOLL">
          <span className="text-white"><Trend>MID:15.44</Trend></span>
          <span className="text-[#ffee22]"><Trend>UP:20.63</Trend></span>
          <span className="text-[#e816e0]"><Trend down>LOW:10.26</Trend></span>
        </IndicatorRow>
        <BollChart />
        <IndicatorRow name="MACD">
          <span className="text-white"><Trend>DIF:1.74</Trend></span>
          <span className="text-[#ffee22]"><Trend>DEA:1.24</Trend></span>
          <span className="text-[#e816e0]"><Trend>M:1.01</Trend></span>
        </IndicatorRow>
        <MacdChart />
        <span className="absolute top-0 bottom-0 left-[58%] w-0.5 bg-[#8a8d8a]" />
      </div>
      <TimeAxis />
    </main>
  );
}

/* ---------- bottom bar ---------- */

const ACTIONS: { label: string; icon: ReactNode }[] = [
  {
    label: '交易',
    icon: (
      <>
        <path d="M20 9a29 29 0 0 1 42 37M62 47v-8M62 47l7-5M52 58A29 29 0 0 1 9 20M9 20l-6 4M9 20l2 8" />
        <path d="M25 19l10 13 10-13M25 32h20M25 42h20M35 32v19" />
      </>
    ),
  },
  {
    label: '发帖',
    icon: (
      <>
        <path d="M50 5H13q-7 0-7 7v43q0 7 7 7h44q7 0 7-7V22" />
        <path d="M54 14L30 38M58 10l4-4" strokeWidth="7" />
      </>
    ),
  },
  {
    label: '功能',
    icon: (
      <>
        <rect x="8" y="7" width="24" height="24" rx="4" />
        <rect x="8" y="37" width="24" height="24" rx="4" />
        <rect x="38" y="37" width="24" height="24" rx="4" />
        <path d="M49 5l14 14-14 14-14-14z" strokeLinejoin="round" />
      </>
    ),
  },
  {
    label: '设自选',
    icon: (
      <>
        <circle cx="35" cy="34" r="29" />
        <path d="M22 34h.1M35 34h.1M48 34h.1" strokeWidth="7" strokeLinecap="round" />
      </>
    ),
  },
];

function BottomBar(): JSX.Element {
  return (
    <footer className="flex min-h-[187px] flex-1 border-t border-[#2a2d2a] pt-2 text-[38px] text-[#86878d]">
      <a href="#index" className="flex w-[298px] shrink-0 flex-col items-center text-[#1fc71f]">
        <svg viewBox="0 0 24 9" className="h-[9px] w-6 fill-[#7c7d80]" aria-hidden="true">
          <path d="M0 9h24L12 0z" />
        </svg>
        <span className="text-[43px] leading-[60px]">3897.03</span>
        <span className="flex w-full justify-between pr-1 pl-11 leading-[50px]">
          <span className="text-[#86878d]">上证</span>-0.94%
        </span>
      </a>
      <div className="flex flex-1">
        {ACTIONS.map((action) => (
          <button key={action.label} type="button" className="flex flex-1 flex-col items-center">
            <svg viewBox="0 0 70 68" className="h-[68px] w-[70px]" fill="none" stroke="#8c8d93" strokeWidth="3">
              {action.icon}
            </svg>
            <span className="mt-2 leading-[50px]">{action.label}</span>
          </button>
        ))}
      </div>
    </footer>
  );
}

export default function App(): JSX.Element {
  return (
    <div className="relative flex min-h-screen flex-col overflow-hidden bg-[#1a1d1a] font-['Noto_Sans_CJK_SC','Noto_Sans',sans-serif]">
      <div className="border-b border-[#2e312e]">
        <StatusBar />
        <Header />
      </div>
      <Quote />
      <BondRow />
      <AfterHoursRow />
      <Notice />
      <Tabs />
      <Chart />
      <BottomBar />
      {/* hand-drawn marks over the page */}
      <svg
        viewBox="0 0 1216 2688"
        className="pointer-events-none absolute top-0 left-0 w-full"
        fill="none"
        stroke="#fe0000"
        strokeWidth="13"
        strokeLinecap="round"
        aria-hidden="true"
      >
        <path d="M-6 262Q18 205 60 163Q94 135 124 135H178Q204 135 232 156Q276 187 310 211C350 250 384 310 384 375C382 430 360 480 335 508Q318 534 290 534C240 535 190 534 155 532Q80 529 -6 531" />
        <path d="M-6 594Q10 640 48 672Q84 700 130 720L193 745" />
        <path d="M592 1149Q640 1132 706 1117Q800 1102 929 1085" />
      </svg>
    </div>
  );
}
